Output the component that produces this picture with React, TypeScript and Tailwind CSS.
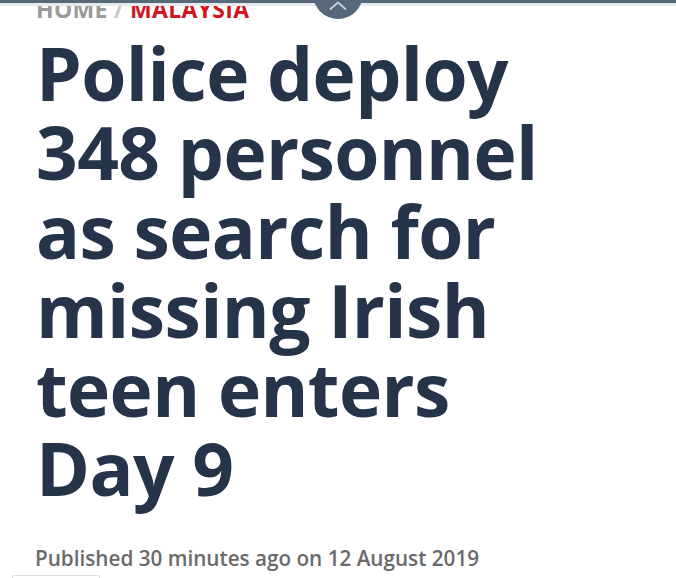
import React from "react";

export default function App() {
  return (
    <div
      className="relative w-full h-[578px] bg-white overflow-hidden"
      style={{ fontFamily: '"Open Sans", "Noto Sans", sans-serif' }}
    >
      <div className="px-[36px]">
        <div className="mt-[-2px] text-[23px] leading-[23px] font-bold tracking-[0.3px] whitespace-nowrap">
          <span className="text-[#9a9a9a]">HOME</span>
          <span className="text-[#c8c8c8]"> / </span>
          <span className="text-[#d0161e]">MALAYSIA</span>
        </div>
        <h1 className="mt-[12px] text-[73px] leading-[79px] font-bold text-[#26344a] tracking-[-0.6px]">
          Police deploy
          <br />
          348 personnel
          <br />
          as search for
          <br />
          missing Irish
          <br />
          teen enters
          <br />
          Day 9
        </h1>
        <div className="mt-[37px] ml-[-1px] text-[20.7px] leading-[28px] font-semibold text-[#6a6a6a] whitespace-nowrap">
          Published 30 minutes ago on 12 August 2019
        </div>
      </div>
      <div className="ml-[12px] mt-[3px] w-[88px] h-[12px] border border-[#dddddd] rounded-[2px]" />

      <div className="absolute left-0 top-0 w-full h-[3px] bg-[#56687a]" />
      <div className="absolute left-0 top-[3px] w-full h-[3px] bg-[#e6eaee]" />
      <div className="absolute left-[313px] top-[-31px] w-[50px] h-[50px] rounded-full bg-[#56687a] flex items-end justify-center pb-[9px]">
        <svg width="18" height="9" viewBox="0 0 18 9" fill="none">
          <path d="M1.5 8 L9 1.5 L16.5 8" stroke="#c9d2da" strokeWidth="1.8" strokeLinecap="round" strokeLinejoin="round" />
        </svg>
      </div>
    </div>
  );
}
